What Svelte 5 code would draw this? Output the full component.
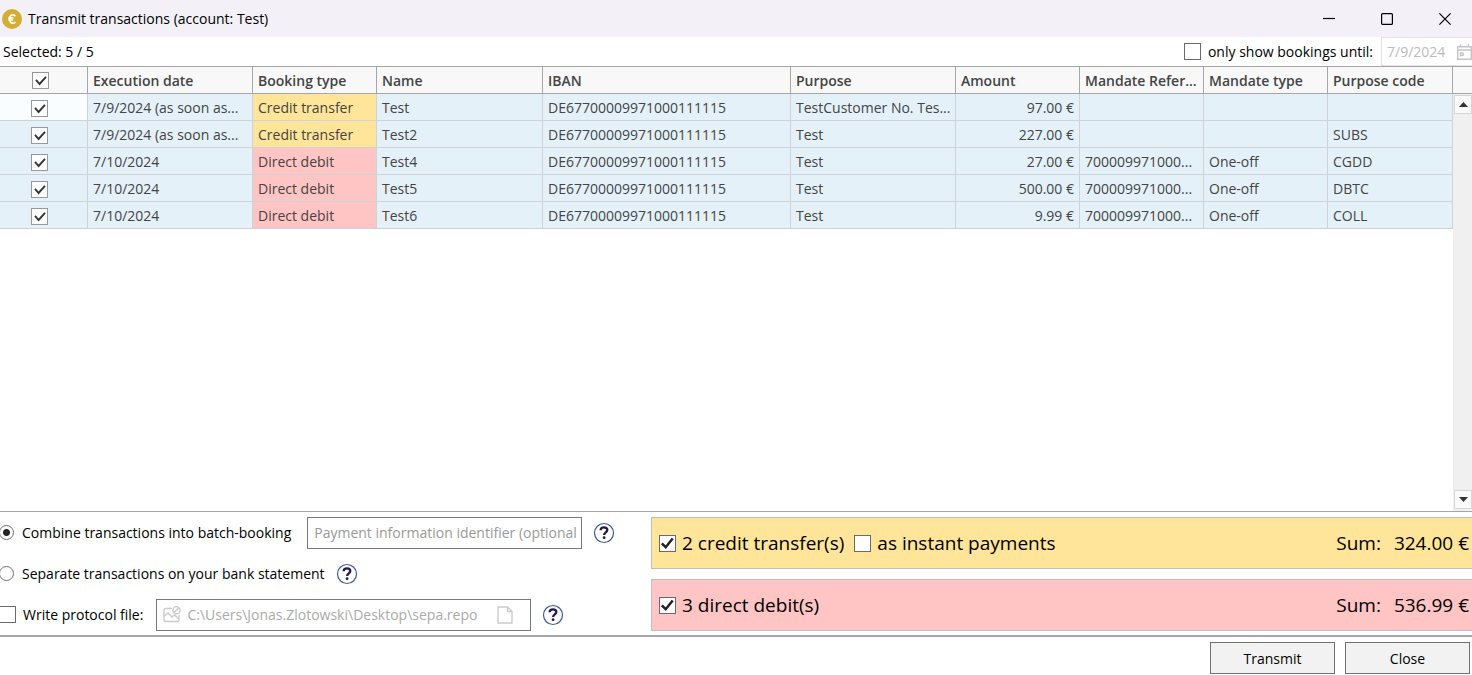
<script>
  const columns = [
    { label: 'Execution date', key: 'date' },
    { label: 'Booking type', key: 'type' },
    { label: 'Name', key: 'name' },
    { label: 'IBAN', key: 'iban' },
    { label: 'Purpose', key: 'purpose' },
    { label: 'Amount', key: 'amount' },
    { label: 'Mandate Refer...', key: 'mandate' },
    { label: 'Mandate type', key: 'mandateType' },
    { label: 'Purpose code', key: 'code' }
  ];

  const iban = 'DE67700009971000111115';
  let rows = $state([
    { on: true, date: '7/9/2024 (as soon as...', type: 'Credit transfer', name: 'Test', iban, purpose: 'TestCustomer No. Tes...', amount: '97.00 €', mandate: '', mandateType: '', code: '' },
    { on: true, date: '7/9/2024 (as soon as...', type: 'Credit transfer', name: 'Test2', iban, purpose: 'Test', amount: '227.00 €', mandate: '', mandateType: '', code: 'SUBS' },
    { on: true, date: '7/10/2024', type: 'Direct debit', name: 'Test4', iban, purpose: 'Test', amount: '27.00 €', mandate: '700009971000...', mandateType: 'One-off', code: 'CGDD' },
    { on: true, date: '7/10/2024', type: 'Direct debit', name: 'Test5', iban, purpose: 'Test', amount: '500.00 €', mandate: '700009971000...', mandateType: 'One-off', code: 'DBTC' },
    { on: true, date: '7/10/2024', type: 'Direct debit', name: 'Test6', iban, purpose: 'Test', amount: '9.99 €', mandate: '700009971000...', mandateType: 'One-off', code: 'COLL' }
  ]);

  let selected = $derived(rows.filter((r) => r.on).length);
  let booking = $state('combine');

  function toggleAll(e) {
    const on = e.currentTarget.checked;
    for (const r of rows) r.on = on;
  }
</script>

{#snippet help(label)}
  <button class="help" type="button" aria-label={label}>
    <svg width="22" height="22" viewBox="0 0 22 22" aria-hidden="true">
      <circle cx="11" cy="11" r="9.5" fill="#fff" stroke="#3d5a9e" stroke-width="1.2" />
      <path d="M7.6 8.3C7.700 6.200 9 5.400 10.900 5.400c2 0 3.400 1 3.400 2.700 0 2.300-3.200 2.300-3.200 4.900" fill="none" stroke="#241a4c" stroke-width="2.3" />
      <circle cx="11.1" cy="15.700" r="1.400" fill="#241a4c" />
    </svg>
  </button>
{/snippet}

<div class="window">
  <header class="titlebar">
    <svg class="logo" width="20" height="20" viewBox="0 0 20 20" aria-hidden="true">
      <circle cx="10" cy="10" r="10" fill="#d4ae32" />
      <path d="M13.400 7.200C12.700 6.200 11.800 5.900 10.800 5.900 8.700 5.900 7.700 7.500 7.700 10s1 4.100 3.100 4.100c1 0 1.900-.3 2.600-1.200M6.200 9h5.300M6.200 11h4.800" fill="none" stroke="#fff" stroke-width="1.700" />
    </svg>
    <h1>Transmit transactions (account: Test)</h1>
    <div class="controls">
      <button type="button" aria-label="Minimize"><svg width="12" height="12" viewBox="0 0 12 12"><path d="M0 5.500h12" /></svg></button>
      <button type="button" aria-label="Maximize"><svg width="12" height="12" viewBox="0 0 12 12"><rect x=".6" y=".6" width="10.800" height="10.800" rx="1" /></svg></button>
      <button type="button" aria-label="Close window"><svg width="12" height="12" viewBox="0 0 12 12"><path d="M.4.4l11.200 11.200M11.600.4L.4 11.600" /></svg></button>
    </div>
  </header>

  <div class="toolbar">
    <span class="count">Selected: {selected} / {rows.length}</span>
    <label class="until"><input type="checkbox" /> only show bookings until:</label>
    <div class="datebox">
      <input type="text" value="7/9/2024" disabled aria-label="Show bookings until" />
      <svg width="15" height="16" viewBox="0 0 15 16" aria-hidden="true">
        <path d="M.7 2.700h13.600v12.600H.7zM.7 6h13.600M3.500.3v3M11.500.3v3" />
        <path d="M3.500 9h2.500v2.500h-2.500z" />
      </svg>
    </div>
  </div>

  <main class="grid">
    <table>
      <colgroup>
        <col class="w-check" /><col class="w-wide" /><col class="w-std" /><col class="w-name" /><col class="w-iban" />
        <col class="w-wide" /><col class="w-std" /><col class="w-std" /><col class="w-std" /><col class="w-last" />
      </colgroup>
      <thead>
        <tr>
          <th class="pick"><input type="checkbox" aria-label="Select all" checked={selected === rows.length} onchange={toggleAll} /></th>
          {#each columns as c}<th>{c.label}</th>{/each}
        </tr>
      </thead>
      <tbody>
        {#each rows as row, i}
          <tr>
            <td class="pick" class:current={i === 0}><input type="checkbox" aria-label={'Select ' + row.name} bind:checked={row.on} /></td>
            {#each columns as c}
              <td
                class:amount={c.key === 'amount'}
                class:credit={c.key === 'type' && row.type === 'Credit transfer'}
                class:debit={c.key === 'type' && row.type === 'Direct debit'}>{row[c.key]}</td>
            {/each}
          </tr>
        {/each}
      </tbody>
    </table>
    <div class="side">
      <div class="corner"></div>
      <div class="scroll">
        <button type="button" aria-label="Scroll up"><svg width="9" height="5" viewBox="0 0 9 5"><path d="M4.500 0L9 5H0z" /></svg></button>
        <button type="button" aria-label="Scroll down"><svg width="9" height="5" viewBox="0 0 9 5"><path d="M4.500 5L0 0h9z" /></svg></button>
      </div>
    </div>
  </main>

  <section class="options">
    <div class="choices">
      <div class="line">
        <label class="radio"><input type="radio" name="booking" value="combine" bind:group={booking} /> Combine transactions into batch-booking</label>
        <input class="field ident" type="text" placeholder="Payment information identifier (optional" aria-label="Payment information identifier" />
        {@render help('Help on batch booking')}
      </div>
      <div class="line">
        <label class="radio"><input type="radio" name="booking" value="separate" bind:group={booking} /> Separate transactions on your bank statement</label>
        {@render help('Help on separate transactions')}
      </div>
      <div class="line">
        <label class="protocol"><input type="checkbox" /> Write protocol file:</label>
        <div class="field file">
          <svg class="faint" width="18" height="17" viewBox="0 0 18 17" aria-hidden="true">
            <path d="M9 2.500H2.500q-1.500 0-1.500 1.500v10q0 1.500 1.500 1.500h12q1.500 0 1.500-1.500V9M1 10.500l4-3.500 4 4 2.500-2 4.500 4" />
            <circle cx="13.500" cy="4.200" r="3.600" />
            <path d="M11 6.800l5-5.200" />
          </svg>
          <input type="text" value="C:\Users\Jonas.Zlotowski\Desktop\sepa.repo" disabled aria-label="Protocol file path" />
          <button type="button" disabled aria-label="Choose file">
            <svg class="faint" width="16" height="18" viewBox="0 0 16 18"><path d="M1 1h9.500l4.500 4.500V17H1zM10.500 1v4.500H15" /></svg>
          </button>
        </div>
        {@render help('Help on the protocol file')}
      </div>
    </div>

    <div class="totals">
      <div class="total credit">
        <label><input type="checkbox" checked /> 2 credit transfer(s)</label>
        <label><input type="checkbox" /> as instant payments</label>
        <span class="sum">Sum:</span><span>324.00 €</span>
      </div>
      <div class="total debit">
        <label><input type="checkbox" checked /> 3 direct debit(s)</label>
        <span class="sum">Sum:</span><span>536.99 €</span>
      </div>
    </div>
  </section>

  <footer>
    <button type="button">Transmit</button>
    <button type="button">Close</button>
  </footer>
</div>

<style>
  :global(body) { margin: 0; background: #fff; }
  .window, .window input, .window button { font-family: "Segoe UI", "Open Sans", "Noto Sans", sans-serif; font-size: 14px; }
  .window { display: flex; flex-direction: column; min-height: 100vh; color: #000; line-height: 20px; }
  .window :global(*) { box-sizing: border-box; }
  button { padding: 0; margin: 0; border: 0; background: none; color: inherit; }
  label { display: flex; align-items: center; white-space: nowrap; }
  svg { display: block; flex: none; }

  input[type="checkbox"] { appearance: none; flex: none; width: 17px; height: 17px; margin: 0; border: 1px solid #6b6b6b; background: #fff center / 15px 15px no-repeat; }
  input[type="checkbox"]:checked { background-image: url("data:image/svg+xml,%3Csvg xmlns='http://www.w3.org/2000/svg' viewBox='0 0 15 15'%3E%3Cpath d='M1.800 7.300l3.900 3.900 7-8.700' fill='none' stroke='%23222' stroke-width='2.500'/%3E%3C/svg%3E"); }
  .grid input[type="checkbox"] { border-color: #999; }
  .grid input[type="checkbox"]:checked { background-image: url("data:image/svg+xml,%3Csvg xmlns='http://www.w3.org/2000/svg' viewBox='0 0 15 15'%3E%3Cpath d='M3 6.800l3.600 4.200 6.400-7.200' fill='none' stroke='%23333' stroke-width='1.900'/%3E%3C/svg%3E"); }

  .titlebar { display: flex; align-items: center; height: 37px; padding-left: 2px; background: #f3f0f8; }
  .titlebar h1 { margin: 0 0 0 6px; font-size: 14px; font-weight: 400; }
  .controls { display: flex; gap: 4px; margin-left: auto; }
  .controls button { display: grid; place-items: center; width: 54px; height: 36px; }
  .controls svg { fill: none; stroke: #000; stroke-width: 1.2; }

  .toolbar { display: flex; align-items: center; height: 29px; }
  .count { margin-left: 3px; }
  .until { margin-left: auto; gap: 7px; }
  .datebox { display: flex; align-items: center; justify-content: space-between; width: 91px; height: 29px; margin-left: 8px; padding-left: 5px; border: 1px solid #e3e3e3; border-right: 0; }
  .datebox input { width: 66px; padding: 0; border: 0; background: none; color: #bbb; }
  .datebox svg { fill: none; stroke: #c4c4c4; stroke-width: 1.400; }

  .grid { flex: 1; display: flex; border-top: 1px solid #a6a6a6; border-bottom: 1px solid #a6a6a6; }
  table { flex: 1; align-self: flex-start; width: 0; table-layout: fixed; border-collapse: separate; border-spacing: 0; color: #444; }
  .w-check { width: 88px; }
  .w-wide { width: 165px; }
  .w-std { width: 124px; }
  .w-last { width: 125px; }
  .w-name { width: 166px; }
  .w-iban { width: 248px; }
  th, td { height: 27px; padding: 2px 5px 0; overflow: hidden; text-align: left; white-space: nowrap; }
  th { border-right: 1px solid #a6a6a6; border-bottom: 1px solid #a6a6a6; background: #f8f8f8; font-weight: 600; }
  td { border-right: 1px solid #d0d3d6; border-bottom: 1px solid #d0d3d6; background: #e4f1f9; }
  .pick input { display: block; margin: 0 auto; }
  th.pick { padding: 0 6px 0 0; }
  td.pick { padding: 2px 8px 0 0; }
  td.current { background: #fafdff; }
  td.amount { text-align: right; }
  .credit { background: #ffe599; }
  .debit { background: #ffc5c5; }
  .side { display: flex; flex-direction: column; width: 19px; }
  .corner { height: 27px; border-bottom: 1px solid #a6a6a6; background: #f8f8f8; }
  .scroll { flex: 1; display: flex; flex-direction: column; justify-content: space-between; padding: 1px 0 2px 1px; background: #f0f0f0; }
  .scroll button { display: grid; place-items: center; height: 19px; border: 1px solid #d6d6d6; background: #fafafa; }
  .scroll svg { fill: #333; }

  .options { display: flex; height: 125px; border-bottom: 2px solid #a6a6a6; }
  .choices { width: 651px; }
  .line { display: flex; align-items: center; height: 41px; }
  .radio { gap: 8px; }
  input[type="radio"] { appearance: none; flex: none; width: 15px; height: 15px; margin: 0 0 0 -1px; border: 1px solid #707070; border-radius: 50%; background: #fff; }
  input[type="radio"]:checked { background: radial-gradient(circle, #222 0 3px, #fff 4px); }
  .protocol { gap: 7px; }
  .protocol input { margin-left: -1px; }
  .field { height: 32px; border: 1px solid #7a7a7a; background: #fff; }
  .ident { width: 275px; margin-left: 16px; padding: 0 2px 0 6px; }
  .ident::placeholder { color: #999; opacity: 1; }
  .file { display: flex; align-items: center; width: 375px; margin-left: 13px; padding: 0 16px 0 6px; }
  .file input { flex: none; width: 297px; margin: 0 13px 0 6px; padding: 0; border: 0; background: none; color: #aaa; }
  .faint { fill: none; stroke: #ccc; stroke-width: 1.400; }
  .help { margin-left: 11px; }
  .totals { flex: 1; display: flex; flex-direction: column; gap: 10px; padding-top: 5px; }
  .total { display: flex; align-items: center; gap: 10px; height: 52px; padding: 0 3px 0 7px; border: 1px solid #bfbfbf; border-right: 0; font-size: 19px; }
  .total label { gap: 6px; }
  .sum { margin-left: auto; margin-right: 3px; }

  footer { display: flex; justify-content: flex-end; gap: 10px; padding: 5px 2px 1px; }
  footer button { width: 125px; height: 32px; border: 1px solid #707070; background: #f2f2f2; }
</style>
